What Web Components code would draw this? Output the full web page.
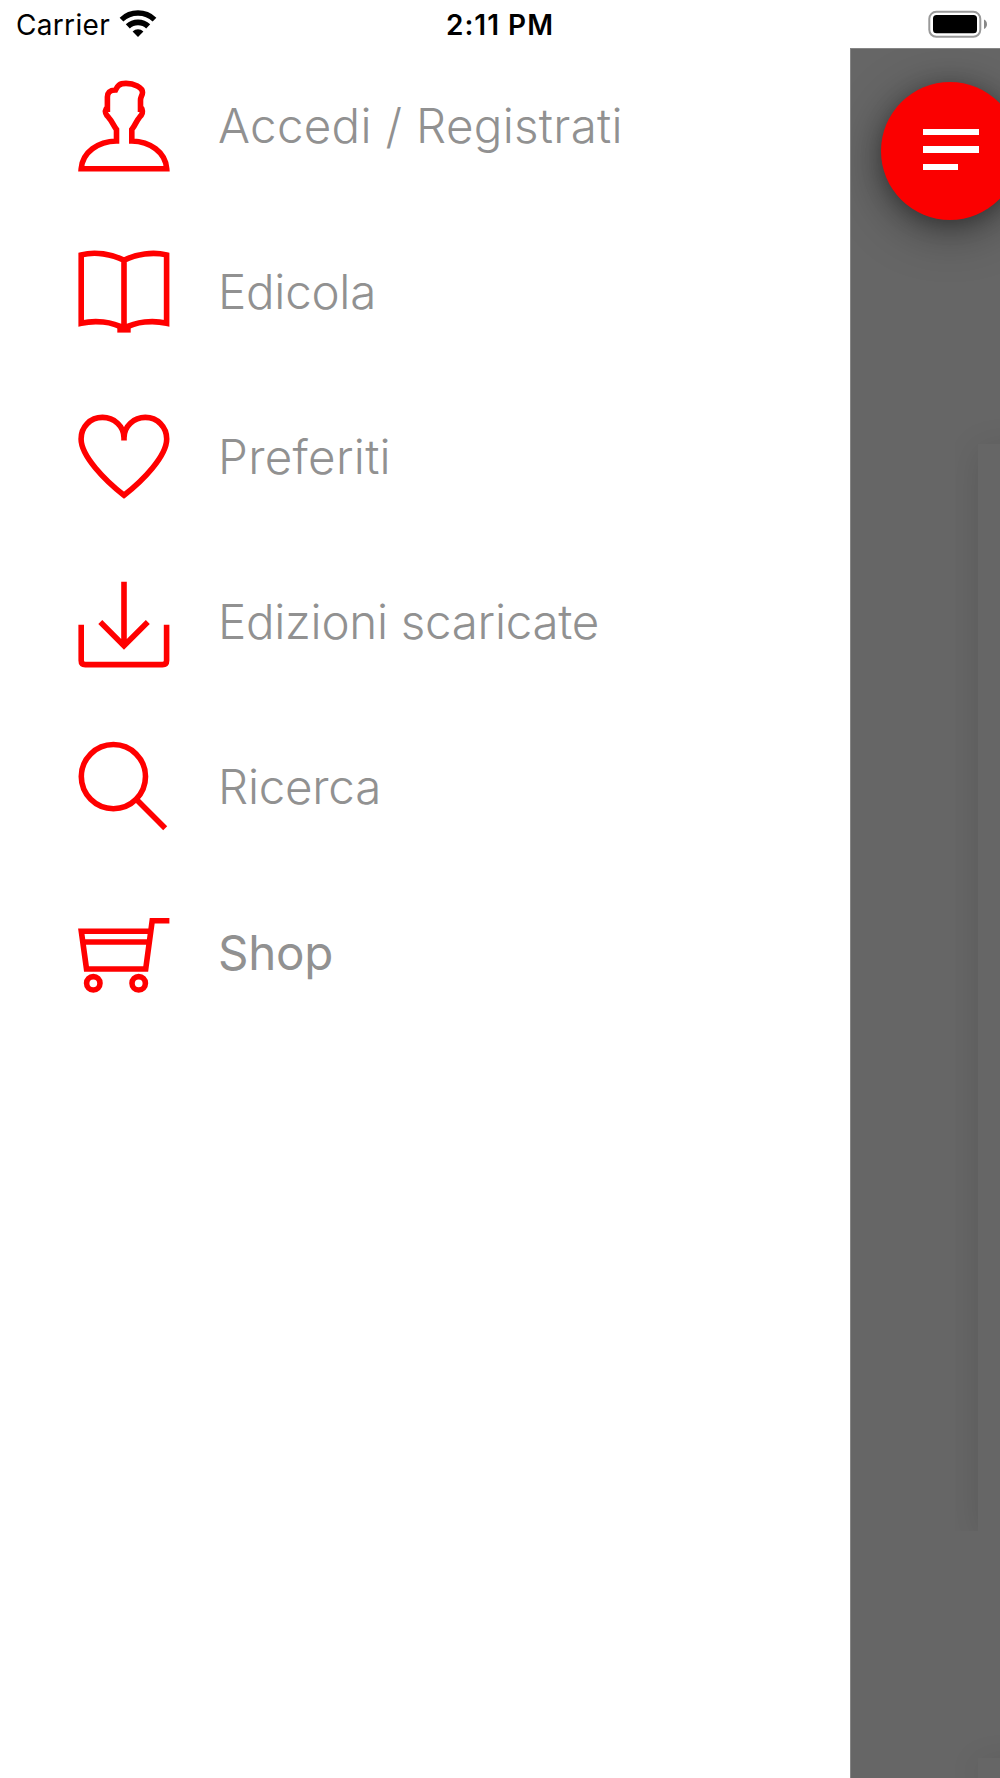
<!DOCTYPE html>
<html lang="it">
<head>
<meta charset="utf-8">
<title>Menu</title>
<style>
html,body{margin:0;padding:0;background:#fff}
body{width:1000px;height:1778px;overflow:hidden}
</style>
</head>
<body>
<app-screen></app-screen>
<script>
const define = (name, html, setup) => customElements.define(name, class extends HTMLElement {
  connectedCallback() {
    if (this.shadowRoot) return;
    const root = this.attachShadow({ mode: 'open' });
    root.innerHTML = html;
    if (setup) setup(this, root);
  }
});

// Spreads a word to a given advance width.
define('fit-text', `<style>:host{display:inline-block;white-space:pre}span{display:inline-block}</style><span></span>`, (el, root) => {
  const s = root.querySelector('span');
  s.textContent = el.getAttribute('text');
  const n = s.textContent.length;
  const ls = (Number(el.getAttribute('width')) - s.getBoundingClientRect().width) / n;
  s.style.letterSpacing = ls + 'px';
});

define('status-bar', `<style>
:host{display:grid;grid-template-columns:1fr auto 1fr;height:48px;box-sizing:border-box;padding:0 12px 0 16px;background:#fff;color:#000;font:400 28px/51px Inter,"Liberation Sans",sans-serif}
.left{display:flex;gap:9px}.time{font-weight:600;margin-left:-4px}
.right{display:flex;justify-content:flex-end}svg{display:block}
</style>
<div class="left"><fit-text text="Carrier" width="94"></fit-text>
<svg width="40" height="48" viewBox="119.5 0 40 48"><g fill="none" stroke="#000"><path stroke-width="5.4" d="M122 19.6A24 24 0 0 1 155 19.6"/><path stroke-width="5.8" d="M128.3 26.4A14.7 14.7 0 0 1 148.7 26.4"/></g><path d="M138.5 37L133.1 31.4A8.2 8.2 0 0 1 143.9 31.4Z"/></svg></div>
<div class="time"><fit-text text="2:11 PM" width="108"></fit-text></div>
<div class="right"><svg width="62" height="48" viewBox="926 0 62 48"><rect x="929.3" y="11.8" width="51" height="25" rx="7" fill="#fff" stroke="#999" stroke-width="2"/><rect x="933" y="15" width="44" height="18.2" rx="3.5"/><path d="M984 19.5Q987 21 987 24.3Q987 27.600 984 29Z" fill="#888"/></svg></div>`);

const icons = {
  user: '<path d="M81.200 168.700C82.500 152 98 141.500 116.500 141V129.500C113.500 125.500 112 121 108.500 117.300C105.800 114.800 104.600 111.500 106 109.300H107.400V97C107.400 92 110 90.300 115.500 90C117.500 86 119 83.400 126 83.400C134 83.400 142.500 87.500 142.500 92.500C142.500 95 140.500 97 140.500 100V109.300H142C143 112 142.500 114.500 139.500 117.300C136.500 120.500 135.500 125 131.800 129.500V141C150 141.500 165.500 152 166.700 168.700Z"/>',
  book: '<path d="M81.200 254.900C95 251.300 112 254 124 260.300C136 254 153 251.500 166.600 254.900V323.300C153 320 136 321.500 124 328.500C112 321.500 95 320 81.200 323.300ZM124 260V330"/><path d="M117.300 329.600H130.700" stroke-width="6"/>',
  heart: '<path d="M124 440.500V438C124 426 114 417.400 102.500 417.400C90 417.400 81.100 427 81.100 439C81.100 456 105 480.500 124 495.200C143 480.500 166.700 456 166.700 439C166.700 427 157.500 417.400 145.300 417.400C134 417.400 124 426 124 438"/>',
  download: '<path d="M124 581.700V645M100.300 622L124 645.800L147.800 622M81.200 624.700V660.500Q81.200 664.600 85.300 664.600H162.500Q166.600 664.600 166.600 660.500V624.700"/>',
  search: '<circle cx="113.400" cy="776.600" r="32.100"/><path d="M136.500 799.500L165.200 828.200"/>',
  cart: '<path d="M169.400 920.800H152.200L145.700 969H86.500L81.300 931.200H150.500M83 942H149"/><circle cx="93.300" cy="983.300" r="6.700"/><circle cx="138.700" cy="983.300" r="6.700"/>'
};

define('menu-item', `<style>
:host{display:flex;gap:44px;padding-left:74px;box-sizing:border-box;color:#919191;font:300 47.500px/155px Inter,"Liberation Sans",sans-serif}
:host([strong]){font-weight:400}
svg{display:block;flex:none;fill:none;stroke:#ff0000;stroke-width:5.600}
</style><svg width="100"></svg><fit-text></fit-text>`, (el, root) => {
  const top = Number(el.getAttribute('top')), h = Number(el.getAttribute('h'));
  el.style.height = h + 'px';
  const svg = root.querySelector('svg');
  svg.setAttribute('height', h);
  svg.setAttribute('viewBox', `74 ${top} 100 ${h}`);
  svg.innerHTML = icons[el.getAttribute('icon')];
  const old = root.querySelector('fit-text'), t = document.createElement('fit-text');
  t.setAttribute('text', el.getAttribute('label'));
  t.setAttribute('width', el.getAttribute('w'));
  old.replaceWith(t);
});

define('side-menu', `<style>:host{display:flex;flex-direction:column;width:850px;background:#fff}</style><slot></slot>`);

define('menu-button', `<style>
:host{position:absolute;left:30px;top:33px;width:138px;height:138px;border-radius:50%;background:#fb0000;display:flex;flex-direction:column;justify-content:center;box-sizing:border-box;padding:0 0 3px 42px;gap:11px;box-shadow:0 10px 50px rgba(0,0,0,.4),0 5px 20px rgba(0,0,0,.25)}
i{display:block;width:56px;height:6.300px;background:#fff}i:last-child{width:34.500px}
</style><i></i><i></i><i></i>`);

// The dimmed page visible behind the open drawer.
define('dimmed-page', `<style>
:host{display:flex;flex-direction:column;position:relative;flex:1;overflow:hidden;background:#666;border-left:1px solid #858585;border-top:1px solid #858585;box-sizing:border-box}
.clip{overflow:hidden;padding:60px 0 0 23px;margin-left:104px;box-sizing:border-box;display:flex}
.first{margin-top:335px;height:1147px}.second{margin-top:167px;flex:1}
.card{flex:1;margin-right:-80px;background:#666;box-shadow:0 5px 32px rgba(0,0,0,.12)}
</style><div class="clip first"><div class="card"></div></div><div class="clip second"><div class="card"></div></div><menu-button></menu-button>`);

define('app-screen', `<style>
:host{display:flex;flex-direction:column;width:1000px;height:1778px;overflow:hidden}
main{display:flex;flex:1;min-height:0}
</style>
<status-bar></status-bar>
<main><side-menu>
<menu-item icon="user" label="Accedi / Registrati" w="405" top="48" h="166"></menu-item>
<menu-item icon="book" label="Edicola" w="158" top="214" h="165"></menu-item>
<menu-item icon="heart" label="Preferiti" w="173" top="379" h="165"></menu-item>
<menu-item icon="download" label="Edizioni scaricate" w="381" top="544" h="165"></menu-item>
<menu-item icon="search" label="Ricerca" w="163" top="709" h="166"></menu-item>
<menu-item strong icon="cart" label="Shop" w="115" top="875" h="165"></menu-item>
</side-menu><dimmed-page></dimmed-page></main>`);
</script>
</body>
</html>
